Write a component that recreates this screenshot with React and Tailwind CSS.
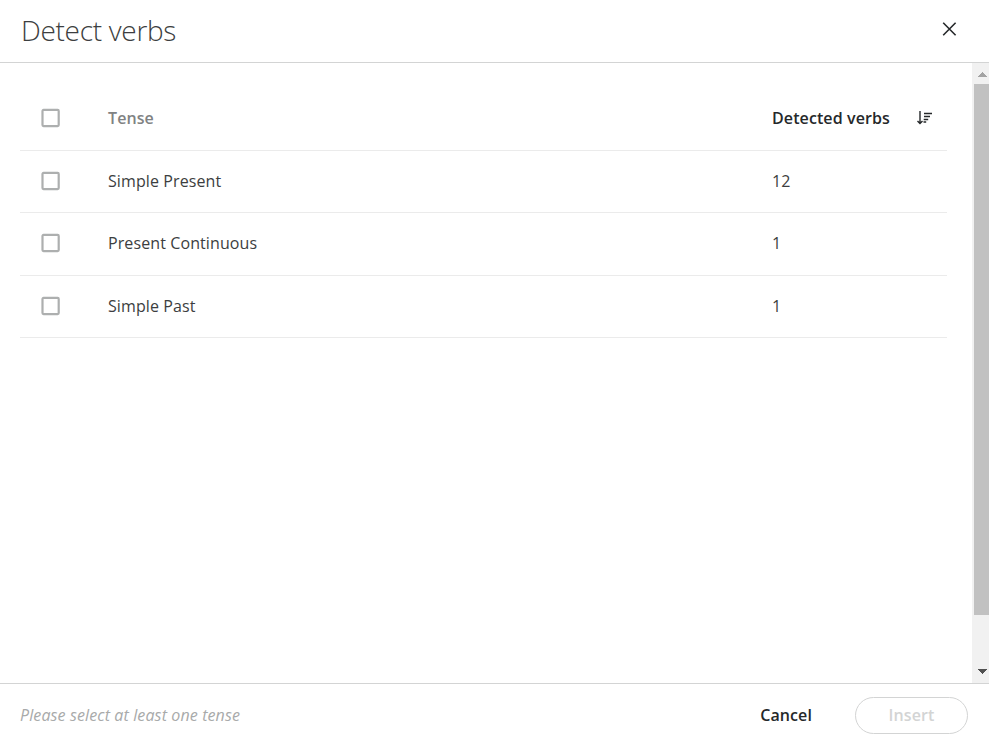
const rows = [
  { tense: "Simple Present", count: 12 },
  { tense: "Present Continuous", count: 1 },
  { tense: "Simple Past", count: 1 },
];

function Checkbox() {
  return (
    <svg width="20" height="20" viewBox="0 0 20 20" fill="none" className="shrink-0">
      <rect x="1.5" y="1.9" width="16.2" height="16.2" rx="1" stroke="#adafaf" strokeWidth="2.2" />
    </svg>
  );
}

function SortIcon() {
  return (
    <svg width="18" height="14" viewBox="0 0 18 14" fill="none" stroke="#25282a">
      <path d="M4 0v12M1.5 10l2.5 2.5L6.500 10" strokeWidth="1.4" />
      <path d="M8 2.5h8M8 5.5h6M7.700 8.500h4.500M7.500 11h2.700" strokeWidth="1.3" />
    </svg>
  );
}

function Scrollbar() {
  return (
    <div className="flex w-[17px] shrink-0 flex-col items-end bg-[#f1f1f1]">
      <svg width="15" height="21" viewBox="0 0 15 21" shapeRendering="crispEdges">
        <path d="M4 14h9L8.5 9z" fill="#a3a3a3" />
      </svg>
      <div className="h-[531px] w-[15px] bg-[#c1c1c1]" />
      <svg width="15" height="20" viewBox="0 0 15 20" className="mt-auto" shapeRendering="crispEdges">
        <path d="M4 6h9l-4.5 5z" fill="#505050" />
      </svg>
    </div>
  );
}

function App() {
  return (
    <div className="flex h-screen w-full flex-col overflow-hidden bg-white font-['Open_Sans',sans-serif] text-base text-[#3c3e40]">
      <header className="flex h-[63px] shrink-0 items-center justify-between border-b border-[#d3d4d4] pr-[32px] pl-[21px]">
        <h1 className="pb-0.5 text-[28px] leading-[60px] font-light tracking-[-0.3px]">Detect verbs</h1>
        <button type="button" aria-label="Close" className="pb-1">
          <svg width="15" height="14" viewBox="0 0 15 14" fill="none" stroke="#25282a" strokeWidth="1.6">
            <path d="M1.2 0.8l12.4 12.4M13.600 0.8L1.2 13.200" />
          </svg>
        </button>
      </header>
      <main className="flex min-h-0 flex-1">
        <div className="flex-1 pt-6 pr-[25px] pl-5 tracking-[0.1px]">
          <div className="flex h-16 items-center border-b border-[#ebebeb] pb-0.5 pl-[21px] font-semibold">
            <Checkbox />
            <span className="ml-[47px] w-[664px] text-[#808283]">Tense</span>
            <span className="w-[144px] text-[#25282a]">Detected verbs</span>
            <SortIcon />
          </div>
          {rows.map((row) => (
            <div key={row.tense} className="flex h-[62.4px] items-center border-b border-[#ebebeb] pb-[1.5px] pl-[21px]">
              <Checkbox />
              <span className="ml-[47px] w-[664px]">{row.tense}</span>
              <span>{row.count}</span>
            </div>
          ))}
        </div>
        <Scrollbar />
      </main>
      <footer className="flex h-[59px] shrink-0 items-center border-t border-[#d3d4d4] pt-1 pr-[21px] pl-5">
        <p className="flex-1 tracking-[0.12px] text-[#a8aaaa] italic">Please select at least one tense</p>
        <button type="button" className="mr-[43px] font-semibold tracking-[0.1px] text-[#25282a]">
          Cancel
        </button>
        <button
          type="button"
          className="h-[37px] w-[113px] rounded-full border border-[#d3d4d4] font-semibold tracking-[0.1px] text-[#d3d4d4]"
        >
          Insert
        </button>
      </footer>
    </div>
  );
}

export default App;
